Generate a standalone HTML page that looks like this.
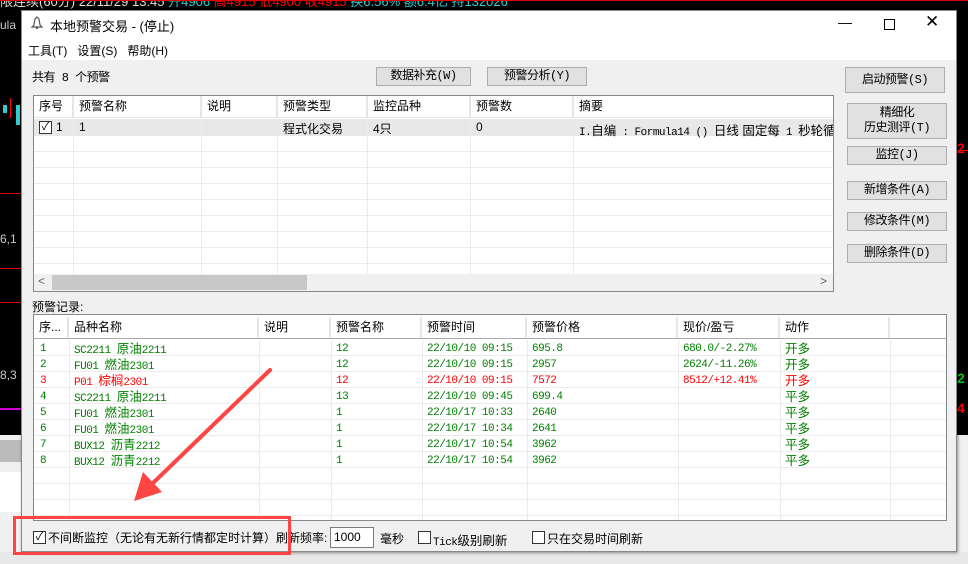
<!DOCTYPE html>
<html><head><meta charset="utf-8"><style>
*{margin:0;padding:0;box-sizing:border-box}
body{width:968px;height:564px;overflow:hidden;background:#000;position:relative;font-family:"Liberation Sans","Noto Sans CJK SC",sans-serif;font-size:12px;color:#000}
.a{position:absolute}
.btn{position:absolute;background:#e1e1e1;border:1px solid #adadad;text-align:center;font-size:12px;line-height:17px;font-family:"Liberation Mono","Noto Sans CJK SC",monospace;letter-spacing:-0.5px}
.t{position:absolute;white-space:nowrap}
.g{color:#008000}.r{color:#f00}
.m{font-family:"Liberation Mono","Noto Sans CJK SC",monospace;font-size:11px;letter-spacing:-0.5px}
.c{font-family:"Liberation Sans","Noto Sans CJK SC",sans-serif;font-size:12.5px;letter-spacing:0}
.hd{position:absolute;top:0;height:21px;border-right:2px solid #e5e5e5;padding-left:5px;line-height:21px;font-size:12px}
.cb{position:absolute;width:13px;height:13px;border:1px solid #333;background:#fff}
</style></head><body>
<div class="a" style="left:0;top:0;width:968px;height:10px;background:#000;overflow:hidden">
<div class="t" style="top:-9px;left:0;color:#ddd;font-size:13px">限连续(60分) 22/11/29 13:45 <span style="color:#3cc">开4906</span> <span class="r">高4915 低4900 收4915</span> <span style="color:#3cc">换6.56% 额6.4亿 持132026</span></div></div>
<div class="a" style="left:0;top:0;width:968px;height:1px;background:#d00"></div>
<div class="a" style="left:0;top:18px;color:#ccc;font-size:12px" >ula</div>
<div class="a" style="left:3px;top:105px;width:4px;height:8px;background:#3cc"></div>
<div class="a" style="left:10px;top:98px;width:1px;height:20px;background:#f00"></div>
<div class="a" style="left:16px;top:105px;width:4px;height:20px;background:#3cc"></div>
<div class="a" style="left:0;top:193px;width:21px;height:1px;background:#d00"></div>
<div class="a" style="left:0;top:232px;color:#ccc;font-size:12px">6,1</div>
<div class="a" style="left:0;top:268px;width:21px;height:1px;background:#d00"></div>
<div class="a" style="left:0;top:302px;width:21px;height:1px;background:#d00"></div>
<div class="a" style="left:0;top:368px;color:#ccc;font-size:12px">8,3</div>
<div class="a" style="left:0;top:408px;width:21px;height:2px;background:#c0c"></div>
<div class="a" style="left:0;top:435px;width:21px;height:129px;background:#f0f0f0"></div>
<div class="a" style="left:0;top:440px;width:21px;height:22px;background:#bbb"></div>
<div class="a" style="left:0;top:472px;width:21px;height:40px;background:#fff"></div>
<div class="a" style="left:0;top:552px;width:968px;height:12px;background:#e8e8e8"></div>
<div class="a" style="left:957px;top:150px;width:11px;height:1px;background:#f00"></div>
<div class="a" style="left:957px;top:140px;color:#f00;font-weight:bold;font-size:14px">2</div>
<div class="a" style="left:957px;top:370px;color:#0c0;font-weight:bold;font-size:14px">2</div>
<div class="a" style="left:957px;top:400px;color:#f00;font-weight:bold;font-size:14px">4</div>
<div class="a" style="left:957px;top:435px;width:11px;height:117px;background:#f0f0f0"></div>

<div class="a" style="left:21px;top:10px;width:936px;height:542px;background:#f0f0f0;border:1px solid #888;box-shadow:1px 1px 3px rgba(0,0,0,.4)"></div>
<div class="a" style="left:22px;top:11px;width:934px;height:49px;background:#fff"></div>
<svg class="a" style="left:30px;top:16px" width="14" height="14"><path d="M7 1 L9 3 L10 9 L12 11 L2 11 L4 9 L5 3 Z" fill="#fff" stroke="#555" stroke-width="1.2"/><rect x="6" y="11" width="2" height="2" fill="#555"/></svg>
<div class="t" style="left:50px;top:16px;font-size:13px">本地预警交易 - (停止)</div>
<div class="t" style="left:838px;top:14px;font-size:14px">&#8212;</div>
<div class="a" style="left:884px;top:19px;width:11px;height:11px;border:1px solid #000"></div>
<div class="t" style="left:925px;top:12px;font-size:17px">&#x2715;</div>
<div class="t" style="left:28px;top:42px;font-size:12px">工具(T) &nbsp; 设置(S) &nbsp; 帮助(H)</div>

<div class="t m" style="left:32px;top:68px;font-size:12px">共有 8 个预警</div>
<div class="btn" style="left:376px;top:67px;width:95px;height:19px">数据补充(W)</div>
<div class="btn" style="left:487px;top:67px;width:100px;height:19px">预警分析(Y)</div>
<div class="btn" style="left:845px;top:67px;width:100px;height:26px;line-height:24px">启动预警(S)</div>
<div class="btn" style="left:847px;top:103px;width:100px;height:36px;line-height:15px;padding-top:2px">精细化<br>历史测评(T)</div>
<div class="btn" style="left:847px;top:146px;width:100px;height:19px">监控(J)</div>
<div class="btn" style="left:847px;top:181px;width:100px;height:19px">新增条件(A)</div>
<div class="btn" style="left:847px;top:212px;width:100px;height:19px">修改条件(M)</div>
<div class="btn" style="left:847px;top:244px;width:100px;height:19px">删除条件(D)</div>

<div class="a" style="left:33px;top:95px;width:801px;height:197px;background:#fff;border:1px solid #828790;overflow:hidden">
 <div class="a" style="left:0;top:0;width:800px;height:22px;border-bottom:1px solid #e5e5e5">
  <div class="hd" style="left:0;width:40px">序号</div>
  <div class="hd" style="left:40px;width:128px">预警名称</div>
  <div class="hd" style="left:168px;width:76px">说明</div>
  <div class="hd" style="left:244px;width:90px">预警类型</div>
  <div class="hd" style="left:334px;width:103px">监控品种</div>
  <div class="hd" style="left:437px;width:103px">预警数</div>
  <div class="hd" style="left:540px;width:260px;border:none">摘要</div>
 </div>
 <div class="a" style="left:0;top:23px;width:800px;height:17px;background:#e8e8e8"></div>
 <div style="position:absolute;left:0;top:40px;width:800px;height:138px;background:repeating-linear-gradient(#fff 0 15px,#ececec 15px 16px)"></div>
 <div class="a" style="left:39px;top:23px;width:1px;height:155px;background:#ececec"></div>
 <div class="a" style="left:167px;top:23px;width:1px;height:155px;background:#ececec"></div>
 <div class="a" style="left:243px;top:23px;width:1px;height:155px;background:#ececec"></div>
 <div class="a" style="left:333px;top:23px;width:1px;height:155px;background:#ececec"></div>
 <div class="a" style="left:436px;top:23px;width:1px;height:155px;background:#ececec"></div>
 <div class="a" style="left:539px;top:23px;width:1px;height:155px;background:#ececec"></div>
 <div class="cb" style="left:5px;top:25px;font-size:11px;line-height:11px;text-align:center">&#10003;</div>
 <div class="t" style="left:22px;top:24px">1</div>
 <div class="t" style="left:45px;top:24px">1</div>
 <div class="t" style="left:249px;top:24px">程式化交易</div>
 <div class="t" style="left:339px;top:24px">4只</div>
 <div class="t" style="left:442px;top:24px">0</div>
 <div class="t m" style="left:545px;top:24px">I.<span class="c">自编</span> : Formula14 () <span class="c">日线 固定每</span> 1 <span class="c">秒轮循</span></div>
 <div class="a" style="left:0;top:178px;width:800px;height:17px;background:#f0f0f0"></div>
 <div class="a" style="left:18px;top:179px;width:255px;height:15px;background:#c8c8c8"></div>
 <div class="t" style="left:4px;top:178px;color:#666;font-size:12px">&lt;</div>
 <div class="t" style="left:786px;top:178px;color:#666;font-size:12px">&gt;</div>
</div>

<div class="t" style="left:32px;top:298px">预警记录:</div>
<div class="a" style="left:33px;top:314px;width:914px;height:207px;background:#fff;border:1px solid #828790;overflow:hidden">
 <div class="a" style="left:0;top:0;width:912px;height:24px;border-bottom:1px solid #aaa">
  <div class="hd" style="left:0;top:2px;width:35px">序...</div>
  <div class="hd" style="left:35px;top:2px;width:190px">品种名称</div>
  <div class="hd" style="left:225px;top:2px;width:72px">说明</div>
  <div class="hd" style="left:297px;top:2px;width:91px">预警名称</div>
  <div class="hd" style="left:388px;top:2px;width:105px">预警时间</div>
  <div class="hd" style="left:493px;top:2px;width:151px">预警价格</div>
  <div class="hd" style="left:644px;top:2px;width:102px">现价/盈亏</div>
  <div class="hd" style="left:746px;top:2px;width:110px">动作</div>
 </div>
 <div style="position:absolute;left:0;top:25px;width:912px;height:180px;background:repeating-linear-gradient(#fff 0 15px,#ececec 15px 16px)"></div>
 <div class="a" style="left:35px;top:25px;width:1px;height:180px;background:#ececec"></div>
 <div class="a" style="left:225px;top:25px;width:1px;height:180px;background:#ececec"></div>
 <div class="a" style="left:297px;top:25px;width:1px;height:180px;background:#ececec"></div>
 <div class="a" style="left:388px;top:25px;width:1px;height:180px;background:#ececec"></div>
 <div class="a" style="left:493px;top:25px;width:1px;height:180px;background:#ececec"></div>
 <div class="a" style="left:644px;top:25px;width:1px;height:180px;background:#ececec"></div>
 <div class="a" style="left:746px;top:25px;width:1px;height:180px;background:#ececec"></div>
 <div class="a" style="left:856px;top:25px;width:1px;height:180px;background:#ececec"></div>
 <div class="a m" style="left:0;top:26px;width:912px;line-height:16px">
  <div class="g"><span class="t" style="left:6px">1</span><span class="t" style="left:40px">SC2211 <span class="c">原油</span>2211</span><span class="t" style="left:302px">12</span><span class="t" style="left:393px">22/10/10 09:15</span><span class="t" style="left:498px">695.8</span><span class="t" style="left:649px">680.0/-2.27%</span><span class="t c" style="left:751px">开多</span>&nbsp;</div>
  <div class="g"><span class="t" style="left:6px">2</span><span class="t" style="left:40px">FU01 <span class="c">燃油</span>2301</span><span class="t" style="left:302px">12</span><span class="t" style="left:393px">22/10/10 09:15</span><span class="t" style="left:498px">2957</span><span class="t" style="left:649px">2624/-11.26%</span><span class="t c" style="left:751px">开多</span>&nbsp;</div>
  <div class="r"><span class="t" style="left:6px">3</span><span class="t" style="left:40px">P01 <span class="c">棕榈</span>2301</span><span class="t" style="left:302px">12</span><span class="t" style="left:393px">22/10/10 09:15</span><span class="t" style="left:498px">7572</span><span class="t" style="left:649px">8512/+12.41%</span><span class="t c" style="left:751px">开多</span>&nbsp;</div>
  <div class="g"><span class="t" style="left:6px">4</span><span class="t" style="left:40px">SC2211 <span class="c">原油</span>2211</span><span class="t" style="left:302px">13</span><span class="t" style="left:393px">22/10/10 09:45</span><span class="t" style="left:498px">699.4</span><span class="t c" style="left:751px">平多</span>&nbsp;</div>
  <div class="g"><span class="t" style="left:6px">5</span><span class="t" style="left:40px">FU01 <span class="c">燃油</span>2301</span><span class="t" style="left:302px">1</span><span class="t" style="left:393px">22/10/17 10:33</span><span class="t" style="left:498px">2640</span><span class="t c" style="left:751px">平多</span>&nbsp;</div>
  <div class="g"><span class="t" style="left:6px">6</span><span class="t" style="left:40px">FU01 <span class="c">燃油</span>2301</span><span class="t" style="left:302px">1</span><span class="t" style="left:393px">22/10/17 10:34</span><span class="t" style="left:498px">2641</span><span class="t c" style="left:751px">平多</span>&nbsp;</div>
  <div class="g"><span class="t" style="left:6px">7</span><span class="t" style="left:40px">BUX12 <span class="c">沥青</span>2212</span><span class="t" style="left:302px">1</span><span class="t" style="left:393px">22/10/17 10:54</span><span class="t" style="left:498px">3962</span><span class="t c" style="left:751px">平多</span>&nbsp;</div>
  <div class="g"><span class="t" style="left:6px">8</span><span class="t" style="left:40px">BUX12 <span class="c">沥青</span>2212</span><span class="t" style="left:302px">1</span><span class="t" style="left:393px">22/10/17 10:54</span><span class="t" style="left:498px">3962</span><span class="t c" style="left:751px">平多</span>&nbsp;</div>
 </div>
</div>

<div class="cb" style="left:33px;top:531px;font-size:11px;line-height:11px;text-align:center">&#10003;</div>
<div class="t" style="left:48px;top:529px;font-size:12px">不间断监控（无论有无新行情都定时计算）刷新频率:</div>
<div class="a" style="left:330px;top:527px;width:44px;height:21px;background:#fff;border:1px solid #7a7a7a;padding:2px 0 0 3px;font-size:12px">1000</div>
<div class="t" style="left:380px;top:530px;font-size:12px">毫秒</div>
<div class="cb" style="left:418px;top:531px"></div>
<div class="t m" style="left:433px;top:530px">Tick<span class="c">级别刷新</span></div>
<div class="cb" style="left:532px;top:531px"></div>
<div class="t" style="left:547px;top:530px;font-size:12px">只在交易时间刷新</div>

<div class="a" style="left:13px;top:516px;width:278px;height:39px;border:3px solid #f44"></div>
<svg class="a" style="left:0;top:0" width="968" height="564">
<line x1="270" y1="370" x2="152" y2="484" stroke="#f44" stroke-width="4" stroke-linecap="round"/>
<polygon points="134,501 143,472 162,492" fill="#f44"/>
</svg>
</body></html>
